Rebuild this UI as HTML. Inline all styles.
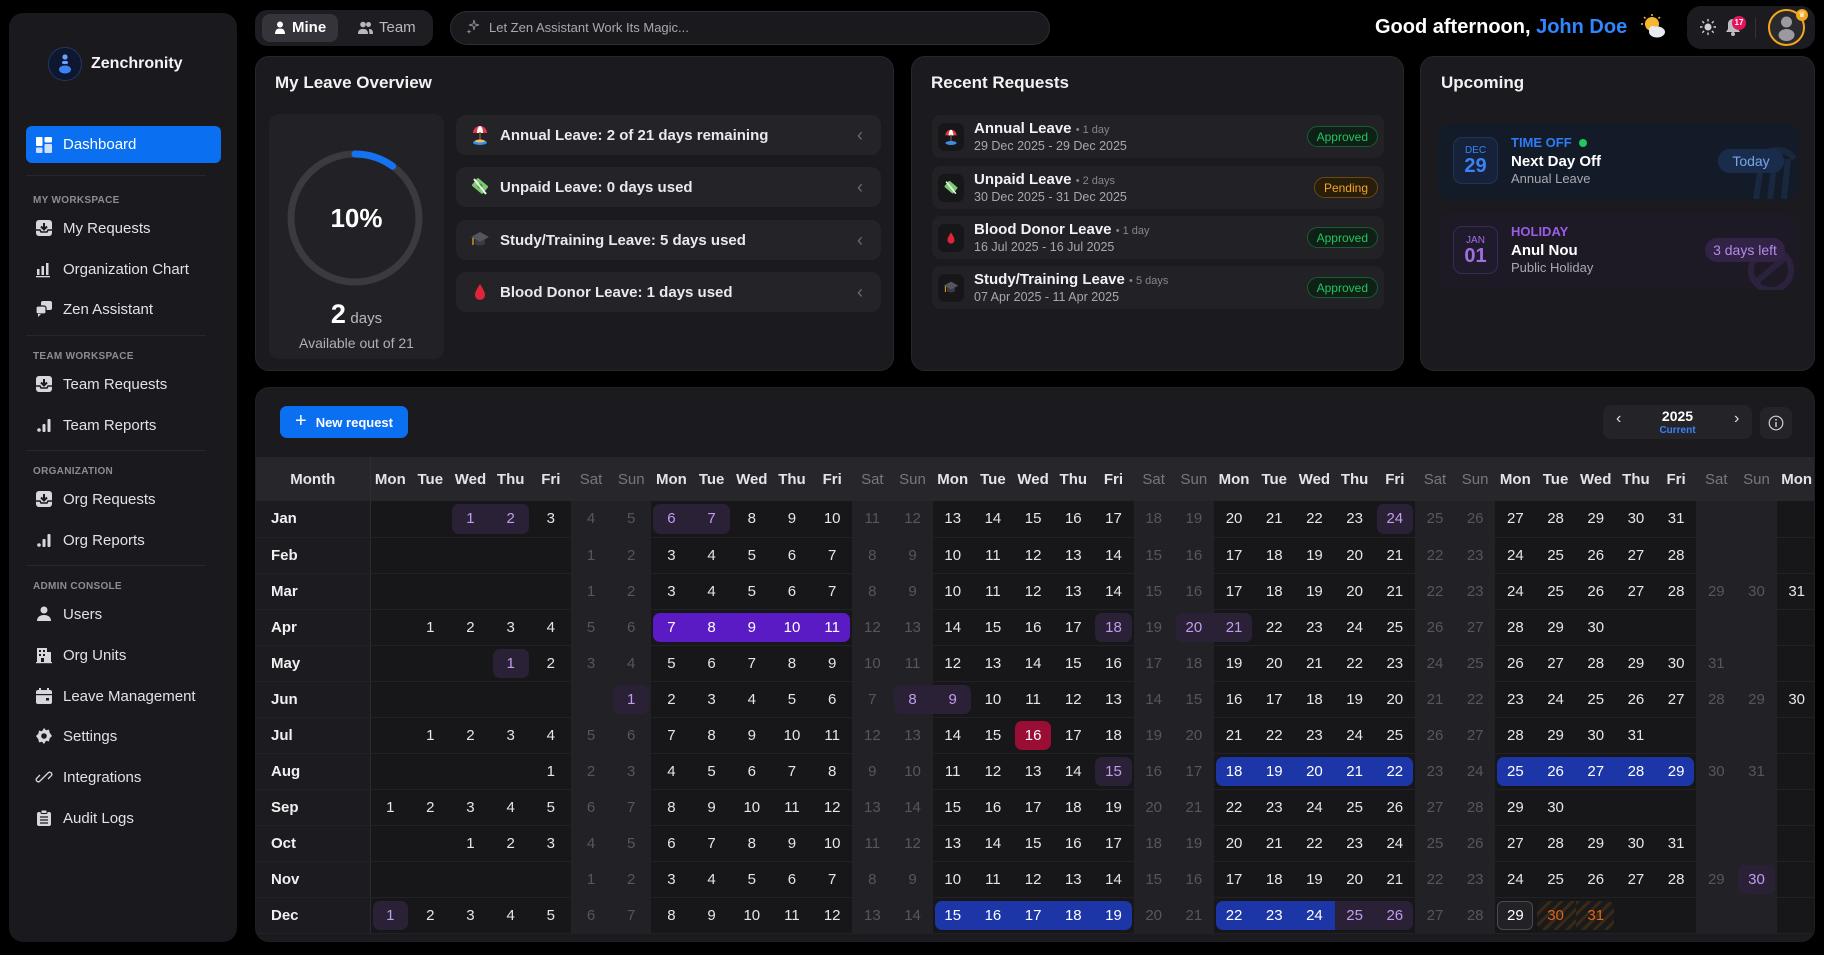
<!DOCTYPE html>
<html><head><meta charset="utf-8">
<style>
*{box-sizing:border-box;margin:0;padding:0}
body{width:1824px;height:955px;background:#000;font-family:"Liberation Sans",sans-serif;color:#e9e9ec;position:relative;overflow:hidden}
.abs{position:absolute}
.card{position:absolute;background:#1b1b1f;border:1px solid #26262b;border-radius:14px;overflow:hidden}
.side{left:9px;top:13px;width:228px;height:929px;background:#1a1a1e;border-radius:14px;position:absolute}
.nav{position:absolute;left:0;width:228px;height:36px;display:flex;align-items:center;font-size:15px;color:#e2e2e6}
.nav svg{position:absolute;left:26px}
.nav span{position:absolute;left:54px}
.sh{position:absolute;left:24px;font-size:10px;font-weight:bold;color:#8c8c94;letter-spacing:.3px}
.dv{position:absolute;left:17px;width:180px;height:1px;background:#26262b}
.title{position:absolute;font-size:17px;font-weight:bold;color:#f2f2f4}
.lrow{position:absolute;left:200px;width:425px;height:40px;background:#232328;border-radius:10px;font-size:15px;font-weight:bold;display:flex;align-items:center}
.lrow svg{margin-left:14px;margin-right:10px}
.lrow .ch{position:absolute;right:18px;color:#6a6a72;font-weight:normal;font-size:18px}
.rq{position:absolute;left:20px;width:452px;height:43px;background:#212126;border-radius:9px}
.rq .ic{position:absolute;left:6px;top:8px;width:26px;height:28px;border-radius:7px;background:#17171a;display:flex;align-items:center;justify-content:center}
.rq .t{position:absolute;left:42px;top:5px;font-size:15px;font-weight:bold;color:#f2f2f4;white-space:nowrap}
.rq .t small{font-size:11px;color:#85858c;font-weight:normal}
.rq .d{position:absolute;left:42px;top:24px;font-size:12.5px;color:#a7a7ae}
.bd{position:absolute;right:6px;top:11px;height:21px;border-radius:11px;font-size:12px;display:flex;align-items:center;padding:0 9px}
.ap{color:#22c55e;border:1px solid #1b5a34;background:#0f2117}
.pe{color:#f5a524;border:1px solid #6a4812;background:#281e0a}
table{position:absolute;left:0;top:69px;border-collapse:collapse;table-layout:fixed;width:1601px}
th,td{height:36px;text-align:center;font-size:15px;font-weight:bold;border-bottom:1px solid #222226;position:relative;z-index:0;padding:0}
thead th{height:44px;background:#26262b;color:#e4e4e8;border:none;width:40.2px}
thead th:first-child{width:114px}
thead th.w{color:#77777e;font-weight:normal}
tbody th{text-align:left;padding-left:15px;background:#1c1c20;color:#f0f0f2;border-right:1px solid #2a2a2f}
thead th:first-child{text-align:center;padding:0;border-right:1px solid #2e2e33}
td{color:#e6e6ea;font-weight:normal}
col.w{background:#222226}
col.d{background:#17171a}
td:nth-child(7n+7),td:nth-child(7n+8){color:#56565c}
td.hp,td.hv,td.hr,td.hb,td.tt,td.hs{font-weight:normal}
td.hp::before,td.hv::before,td.hr::before,td.hb::before,td.tt::before,td.hs::before{content:"";position:absolute;top:3px;bottom:3px;left:0;right:0;z-index:-1}
td.L::before{left:2px;border-top-left-radius:7px;border-bottom-left-radius:7px}
td.R::before{right:2px;border-top-right-radius:7px;border-bottom-right-radius:7px}
td.hp{color:#c39bf0}
td.hp::before{background:#2a2136}
td.hv{color:#fff}
td.hv::before{background:#5a1bc4}
td.hr{color:#fff}
td.hr::before{background:#9a0d34}
td.hb{color:#fff}
td.hb::before{background:#1c36a8}
td.tt{color:#fff}
td.tt::before{left:2px;right:2px;border:1px solid #4a4a50;border-radius:6px;background:#222226}
td.hs{color:#e0651c}
td.hs::before{background:repeating-linear-gradient(135deg,#3a2a14 0 3px,#1a1a1c 3px 8px)}
</style></head><body>

<!-- SIDEBAR -->
<div class="side">
  <div class="abs" style="left:39px;top:34px;width:34px;height:34px;border-radius:50%;background:#0e1730;border:1px solid #223660"></div>
  <svg class="abs" style="left:47px;top:40px" width="18" height="22" viewBox="0 0 18 22"><circle cx="9" cy="4" r="2.6" fill="#6aa1ff"/><rect x="6" y="8" width="6" height="3" rx="1.5" fill="#6aa1ff"/><ellipse cx="9" cy="16.5" rx="6" ry="4" fill="#3b82f6"/></svg>
  <div class="abs" style="left:82px;top:42px;font-size:16px;font-weight:bold;color:#f4f4f6">Zenchronity</div>
  <div class="abs" style="left:17px;top:113px;width:195px;height:37px;border-radius:6px;background:#0a6ff0"></div>
  <svg class="abs" style="left:27px;top:124px" width="16" height="16" viewBox="0 0 16 16"><rect x="0" y="0" width="6.5" height="9" rx="1" fill="#fff"/><rect x="0" y="10.5" width="6.5" height="5.5" rx="1" fill="#cfe0ff"/><rect x="8.5" y="0" width="7.5" height="5.5" rx="1" fill="#fff"/><rect x="8.5" y="7" width="7.5" height="9" rx="1" fill="#cfe0ff"/></svg>
  <div class="abs" style="left:54px;top:123px;font-size:15px;color:#fff">Dashboard</div>
  <div class="dv" style="top:162px"></div>

  <div class="sh" style="top:182px">MY WORKSPACE</div>
  <div class="nav" style="top:197px"><svg width="18" height="18" viewBox="0 0 18 18"><rect x="1" y="1" width="16" height="16" rx="3" fill="#d8d8dc"/><path d="M9 4v6M6 7.5l3 3 3-3" stroke="#1a1a1e" stroke-width="2" fill="none"/><path d="M1 11h4l1 2h6l1-2h4" stroke="#1a1a1e" stroke-width="1.5" fill="none"/></svg><span>My Requests</span></div>
  <div class="nav" style="top:238px"><svg width="18" height="18" viewBox="0 0 18 18"><rect x="2" y="9" width="2.5" height="6" fill="#d8d8dc"/><rect x="6.5" y="6" width="2.5" height="9" fill="#d8d8dc"/><rect x="11" y="3" width="2.5" height="12" fill="#d8d8dc"/><rect x="1" y="16" width="14" height="1.3" fill="#d8d8dc"/></svg><span>Organization Chart</span></div>
  <div class="nav" style="top:278px"><svg width="18" height="18" viewBox="0 0 18 18"><rect x="6" y="1" width="11" height="9" rx="2" fill="#d8d8dc"/><rect x="1" y="6" width="10" height="8" rx="2" fill="#d8d8dc" stroke="#1a1a1e" stroke-width="1.2"/><path d="M3 14v3l3-3" fill="#d8d8dc"/></svg><span>Zen Assistant</span></div>
  <div class="dv" style="top:322px"></div>

  <div class="sh" style="top:338px">TEAM WORKSPACE</div>
  <div class="nav" style="top:353px"><svg width="18" height="18" viewBox="0 0 18 18"><rect x="1" y="1" width="16" height="16" rx="3" fill="#d8d8dc"/><path d="M9 4v6M6 7.5l3 3 3-3" stroke="#1a1a1e" stroke-width="2" fill="none"/><path d="M1 11h4l1 2h6l1-2h4" stroke="#1a1a1e" stroke-width="1.5" fill="none"/></svg><span>Team Requests</span></div>
  <div class="nav" style="top:394px"><svg width="18" height="18" viewBox="0 0 18 18"><circle cx="4" cy="14" r="1.8" fill="#d8d8dc"/><rect x="7.5" y="8" width="3" height="8" rx="1" fill="#d8d8dc"/><rect x="12.5" y="3" width="3" height="13" rx="1" fill="#d8d8dc"/></svg><span>Team Reports</span></div>
  <div class="dv" style="top:437px"></div>

  <div class="sh" style="top:453px">ORGANIZATION</div>
  <div class="nav" style="top:468px"><svg width="18" height="18" viewBox="0 0 18 18"><rect x="1" y="1" width="16" height="16" rx="3" fill="#d8d8dc"/><path d="M9 4v6M6 7.5l3 3 3-3" stroke="#1a1a1e" stroke-width="2" fill="none"/><path d="M1 11h4l1 2h6l1-2h4" stroke="#1a1a1e" stroke-width="1.5" fill="none"/></svg><span>Org Requests</span></div>
  <div class="nav" style="top:509px"><svg width="18" height="18" viewBox="0 0 18 18"><circle cx="4" cy="14" r="1.8" fill="#d8d8dc"/><rect x="7.5" y="8" width="3" height="8" rx="1" fill="#d8d8dc"/><rect x="12.5" y="3" width="3" height="13" rx="1" fill="#d8d8dc"/></svg><span>Org Reports</span></div>
  <div class="dv" style="top:552px"></div>

  <div class="sh" style="top:568px">ADMIN CONSOLE</div>
  <div class="nav" style="top:583px"><svg width="18" height="18" viewBox="0 0 18 18"><circle cx="9" cy="5" r="3.5" fill="#d8d8dc"/><path d="M2 16c0-4 3-6 7-6s7 2 7 6z" fill="#d8d8dc"/></svg><span>Users</span></div>
  <div class="nav" style="top:624px"><svg width="18" height="18" viewBox="0 0 18 18"><rect x="2" y="2" width="10" height="14" fill="#d8d8dc"/><rect x="12" y="6" width="4" height="10" fill="#d8d8dc"/><rect x="4" y="4" width="2" height="2" fill="#1a1a1e"/><rect x="8" y="4" width="2" height="2" fill="#1a1a1e"/><rect x="4" y="8" width="2" height="2" fill="#1a1a1e"/><rect x="8" y="8" width="2" height="2" fill="#1a1a1e"/><rect x="6" y="12" width="3" height="4" fill="#1a1a1e"/><rect x="1" y="16" width="16" height="1.2" fill="#d8d8dc"/></svg><span>Org Units</span></div>
  <div class="nav" style="top:665px"><svg width="18" height="18" viewBox="0 0 18 18"><rect x="1" y="3" width="16" height="14" rx="2" fill="#d8d8dc"/><rect x="1" y="7" width="16" height="1.2" fill="#1a1a1e"/><rect x="4" y="1" width="2" height="4" fill="#d8d8dc"/><rect x="12" y="1" width="2" height="4" fill="#d8d8dc"/><rect x="11" y="11" width="3" height="2.5" fill="#1a1a1e"/></svg><span>Leave Management</span></div>
  <div class="nav" style="top:705px"><svg width="18" height="18" viewBox="0 0 18 18"><path d="M9 1l2 2.2 3-.6.6 3L17 9l-2.4 2.4-.6 3-3-.6L9 17l-2-2.2-3 .6-.6-3L1 9l2.4-2.4.6-3 3 .6z" fill="#d8d8dc"/><circle cx="9" cy="9" r="2.8" fill="#1a1a1e"/></svg><span>Settings</span></div>
  <div class="nav" style="top:746px"><svg width="18" height="18" viewBox="0 0 18 18"><path d="M8 10l-3.5 3.5a2.2 2.2 0 01-3-3L5 7M10 8l3.5-3.5a2.2 2.2 0 013 3L13 11M6.5 11.5l5-5" stroke="#d8d8dc" stroke-width="1.3" fill="none"/></svg><span>Integrations</span></div>
  <div class="nav" style="top:787px"><svg width="18" height="18" viewBox="0 0 18 18"><rect x="2" y="3" width="14" height="14" rx="2" fill="#d8d8dc"/><rect x="6" y="1" width="6" height="3.5" rx="1" fill="#d8d8dc" stroke="#1a1a1e"/><path d="M5 8h8M5 11h8M5 14h8" stroke="#1a1a1e" stroke-width="1.3"/></svg><span>Audit Logs</span></div>
</div>

<!-- TOP BAR -->
<div class="abs" style="left:255px;top:10px;width:178px;height:36px;border-radius:12px;background:#1e1e22"></div>
<div class="abs" style="left:262px;top:14px;width:76px;height:28px;border-radius:8px;background:#34343a"></div>
<svg class="abs" style="left:274px;top:21px" width="12" height="13" viewBox="0 0 12 13"><circle cx="6" cy="3.5" r="3" fill="#fff"/><path d="M1 13c0-4 2-5.5 5-5.5s5 1.5 5 5.5z" fill="#fff"/></svg>
<div class="abs" style="left:292px;top:19px;font-size:15px;font-weight:bold;color:#fff">Mine</div>
<svg class="abs" style="left:358px;top:21px" width="15" height="13" viewBox="0 0 15 13"><circle cx="5" cy="3.5" r="2.8" fill="#b8b8be"/><circle cx="10.5" cy="3.5" r="2.5" fill="#b8b8be"/><path d="M0 13c0-4 2-5 5-5s5 1 5 5z" fill="#b8b8be"/><path d="M11 8c2.5 0 4 1 4 5h-3.5z" fill="#b8b8be"/></svg>
<div class="abs" style="left:379px;top:19px;font-size:15px;color:#b8b8be">Team</div>

<div class="abs" style="left:450px;top:11px;width:600px;height:34px;border-radius:17px;background:#1a1a1e;border:1px solid #2e2e33"></div>
<svg class="abs" style="left:466px;top:19px" width="14" height="16" viewBox="0 0 14 16"><path d="M8 1l1 4 4 1-4 1-1 4-1-4-4-1 4-1z" fill="none" stroke="#8a8a92" stroke-width="1"/><path d="M3 10l.6 2 2 .6-2 .6L3 15l-.6-1.8-2-.6 2-.6z" fill="#8a8a92"/></svg>
<div class="abs" style="left:489px;top:20px;font-size:13px;color:#a8a8b0">Let Zen Assistant Work Its Magic...</div>

<div class="abs" style="left:1375px;top:16px;font-size:20px;font-weight:bold;color:#fff;white-space:nowrap">Good afternoon, <span style="color:#2f86ff">John Doe</span></div>
<svg class="abs" style="left:1641px;top:14px" width="26" height="26" viewBox="0 0 26 26"><circle cx="11" cy="10" r="7" fill="#f7b733"/><g stroke="#f7b733" stroke-width="1.5"><path d="M11 0v2M3 3l1.5 1.5M0 10h2M19 3l-1.5 1.5"/></g><ellipse cx="16" cy="18" rx="8" ry="5.5" fill="#e8ecf2"/><circle cx="12" cy="16" r="4" fill="#e8ecf2"/></svg>

<div class="abs" style="left:1687px;top:6px;width:128px;height:43px;border-radius:14px;background:#1c1c20"></div>
<svg class="abs" style="left:1700px;top:19px" width="16" height="16" viewBox="0 0 16 16"><circle cx="8" cy="8" r="3.5" fill="#d0d0d4"/><g stroke="#d0d0d4" stroke-width="1.4"><path d="M8 0v2.5M8 13.5V16M0 8h2.5M13.5 8H16M2.3 2.3l1.8 1.8M11.9 11.9l1.8 1.8M2.3 13.7l1.8-1.8M11.9 4.1l1.8-1.8"/></g></svg>
<svg class="abs" style="left:1725px;top:18px" width="16" height="18" viewBox="0 0 16 18"><path d="M8 1c3 0 5 2 5 5v5l2 3H1l2-3V6c0-3 2-5 5-5z" fill="#bdbdc2"/><circle cx="8" cy="16" r="2" fill="#bdbdc2"/></svg>
<div class="abs" style="left:1732px;top:16px;width:14px;height:14px;border-radius:50%;background:#e5145a;font-size:8px;color:#fff;font-weight:bold;text-align:center;line-height:14px">17</div>
<div class="abs" style="left:1755px;top:18px;width:1px;height:20px;background:#333338"></div>
<div class="abs" style="left:1768px;top:9px;width:37px;height:37px;border-radius:50%;border:2px solid #f2a81d;background:#2a2a2e"></div>
<svg class="abs" style="left:1776px;top:15px" width="21" height="26" viewBox="0 0 21 26"><circle cx="10.5" cy="7" r="5.5" fill="#9a9aa0"/><ellipse cx="10.5" cy="20" rx="8" ry="6" fill="#9a9aa0"/></svg>
<div class="abs" style="left:1796px;top:9px;width:12px;height:12px;border-radius:50%;background:#f2a81d;font-size:8px;color:#fff;text-align:center;line-height:12px">♛</div>

<!-- MY LEAVE OVERVIEW -->
<div class="card" style="left:255px;top:56px;width:639px;height:315px">
  <div class="title" style="left:19px;top:16px">My Leave Overview</div>
  <div class="abs" style="left:13px;top:57px;width:175px;height:245px;border-radius:10px;background:#212126"></div>
  <svg class="abs" style="left:30px;top:92px" width="138" height="138" viewBox="0 0 138 138"><circle cx="69" cy="69" r="64" fill="none" stroke="#3a3a40" stroke-width="7"/><circle cx="69" cy="69" r="64" fill="none" stroke="#1572f0" stroke-width="7" stroke-dasharray="40.2 402" transform="rotate(-90 69 69)" stroke-linecap="round"/></svg>
  <div class="abs" style="left:13px;top:146px;width:175px;text-align:center;font-size:26px;font-weight:bold;color:#fff">10%</div>
  <div class="abs" style="left:13px;top:242px;width:175px;text-align:center;color:#fff"><span style="font-size:27px;font-weight:bold">2</span> <span style="font-size:15px;color:#b8b8be">days</span></div>
  <div class="abs" style="left:13px;top:278px;width:175px;text-align:center;font-size:14px;color:#b0b0b6">Available out of 21</div>

  <div class="lrow" style="top:58px"><svg width="20" height="22" viewBox="0 0 20 22"><path d="M3 9a7 7 0 0114 0z" fill="#e5364a"/><path d="M7 9a3 7 0 016 0z" fill="#fff"/><rect x="9.3" y="8" width="1.4" height="9" fill="#8a5a2a"/><ellipse cx="10" cy="18.5" rx="7" ry="2.5" fill="#3a8ee6"/><ellipse cx="10" cy="17" rx="5" ry="1.5" fill="#f0c060"/></svg>Annual Leave: 2 of 21 days remaining<span class="ch">&#8249;</span></div>
  <div class="lrow" style="top:110px"><svg width="20" height="22" viewBox="0 0 20 22"><rect x="3" y="5" width="14" height="10" rx="1" fill="#7bc96f" transform="rotate(40 10 10)"/><circle cx="10" cy="10" r="2.5" fill="#3f8f3a"/><path d="M4 3l12 15" stroke="#f0f0f0" stroke-width="2"/></svg>Unpaid Leave: 0 days used<span class="ch">&#8249;</span></div>
  <div class="lrow" style="top:163px"><svg width="20" height="22" viewBox="0 0 20 22"><path d="M10 3l9 5-9 5-9-5z" fill="#555560"/><path d="M5 10v5c3 2 7 2 10 0v-5l-5 3z" fill="#3a3a42"/><path d="M3 9v7" stroke="#f0a020" stroke-width="1.3"/></svg>Study/Training Leave: 5 days used<span class="ch">&#8249;</span></div>
  <div class="lrow" style="top:215px"><svg width="20" height="22" viewBox="0 0 20 22"><path d="M10 3c3 5 5 8 5 11a5 5 0 01-10 0c0-3 2-6 5-11z" fill="#e0243a"/></svg>Blood Donor Leave: 1 days used<span class="ch">&#8249;</span></div>
</div>

<!-- RECENT REQUESTS -->
<div class="card" style="left:911px;top:56px;width:493px;height:315px">
  <div class="title" style="left:19px;top:16px">Recent Requests</div>
  <div class="rq" style="top:58px"><div class="ic"><svg width="16" height="18" viewBox="0 0 20 22"><path d="M3 9a7 7 0 0114 0z" fill="#e5364a"/><path d="M7 9a3 7 0 016 0z" fill="#fff"/><rect x="9.3" y="8" width="1.4" height="9" fill="#8a5a2a"/><ellipse cx="10" cy="18.5" rx="7" ry="2.5" fill="#3a8ee6"/></svg></div><div class="t">Annual Leave <small>• 1 day</small></div><div class="d">29 Dec 2025 - 29 Dec 2025</div><div class="bd ap">Approved</div></div>
  <div class="rq" style="top:109px"><div class="ic"><svg width="16" height="18" viewBox="0 0 20 22"><rect x="3" y="5" width="14" height="10" rx="1" fill="#7bc96f" transform="rotate(40 10 10)"/><path d="M4 3l12 15" stroke="#f0f0f0" stroke-width="2"/></svg></div><div class="t">Unpaid Leave <small>• 2 days</small></div><div class="d">30 Dec 2025 - 31 Dec 2025</div><div class="bd pe">Pending</div></div>
  <div class="rq" style="top:159px"><div class="ic"><svg width="14" height="18" viewBox="0 0 20 22"><path d="M10 3c3 5 5 8 5 11a5 5 0 01-10 0c0-3 2-6 5-11z" fill="#e0243a"/></svg></div><div class="t">Blood Donor Leave <small>• 1 day</small></div><div class="d">16 Jul 2025 - 16 Jul 2025</div><div class="bd ap">Approved</div></div>
  <div class="rq" style="top:209px"><div class="ic"><svg width="16" height="18" viewBox="0 0 20 22"><path d="M10 3l9 5-9 5-9-5z" fill="#555560"/><path d="M5 10v5c3 2 7 2 10 0v-5l-5 3z" fill="#3a3a42"/><path d="M3 9v7" stroke="#f0a020" stroke-width="1.3"/></svg></div><div class="t">Study/Training Leave <small>• 5 days</small></div><div class="d">07 Apr 2025 - 11 Apr 2025</div><div class="bd ap">Approved</div></div>
</div>

<!-- UPCOMING -->
<div class="card" style="left:1420px;top:56px;width:395px;height:315px">
  <div class="title" style="left:20px;top:16px">Upcoming</div>
  <div class="abs" style="left:17px;top:66px;width:361px;height:77px;border-radius:14px;background:#141b28"></div>
  <svg class="abs" style="left:325px;top:90px;opacity:.5" width="50" height="52" viewBox="0 0 50 52"><path d="M10 52l6-40M24 52l5-40M38 52l4-40M12 12c8-12 30-12 36 0" stroke="#1e3357" stroke-width="6" fill="none"/></svg>
  <div class="abs" style="left:32px;top:80px;width:45px;height:47px;border-radius:9px;background:#15223a;border:1px solid #1f3456;text-align:center"><div style="font-size:10px;color:#3b82f6;margin-top:7px">DEC</div><div style="font-size:20px;color:#3b82f6;font-weight:bold;line-height:20px">29</div></div>
  <div class="abs" style="left:90px;top:78px;font-size:13px;font-weight:bold;color:#2f7cf6">TIME OFF <span style="display:inline-block;width:8px;height:8px;border-radius:50%;background:#22c55e;margin-left:4px"></span></div>
  <div class="abs" style="left:90px;top:96px;font-size:15px;font-weight:bold;color:#fff">Next Day Off</div>
  <div class="abs" style="left:90px;top:114px;font-size:13px;color:#a8a8b0">Annual Leave</div>
  <div class="abs" style="left:297px;top:92px;width:66px;height:24px;border-radius:12px;background:#1a2c4c;color:#79a6ea;font-size:14px;text-align:center;line-height:24px">Today</div>

  <div class="abs" style="left:17px;top:156px;width:361px;height:76px;border-radius:14px;background:#1d1a26"></div>
  <svg class="abs" style="left:325px;top:185px;opacity:.5" width="50" height="48" viewBox="0 0 50 48"><circle cx="25" cy="28" r="20" fill="none" stroke="#3c2b55" stroke-width="6"/><path d="M10 40l30-25" stroke="#3c2b55" stroke-width="6"/></svg>
  <div class="abs" style="left:32px;top:169px;width:45px;height:48px;border-radius:9px;background:#201a2d;border:1px solid #3a2a55;text-align:center"><div style="font-size:10px;color:#a070e0;margin-top:8px">JAN</div><div style="font-size:20px;color:#a070e0;font-weight:bold;line-height:20px">01</div></div>
  <div class="abs" style="left:90px;top:167px;font-size:13px;font-weight:bold;color:#9b5de5">HOLIDAY</div>
  <div class="abs" style="left:90px;top:185px;font-size:15px;font-weight:bold;color:#fff">Anul Nou</div>
  <div class="abs" style="left:90px;top:203px;font-size:13px;color:#a8a8b0">Public Holiday</div>
  <div class="abs" style="left:284px;top:181px;width:80px;height:24px;border-radius:12px;background:#322346;color:#b48ce8;font-size:14px;text-align:center;line-height:24px">3 days left</div>
</div>

<!-- CALENDAR -->
<div class="card" style="left:255px;top:387px;width:1560px;height:555px;border-color:#1f1f24">
  <div class="abs" style="left:24px;top:18px;width:128px;height:32px;border-radius:7px;background:#0a6ff0;color:#fff;font-size:13px;font-weight:bold;display:flex;align-items:center;justify-content:center"><span style="font-size:20px;font-weight:normal;margin-right:9px;margin-top:-2px">+</span>New request</div>
  <div class="abs" style="left:1347px;top:17px;width:149px;height:34px;border-radius:8px;background:#232328"></div>
  <div class="abs" style="left:1360px;top:22px;font-size:16px;color:#e0e0e4">&#8249;</div>
  <div class="abs" style="left:1478px;top:22px;font-size:16px;color:#e0e0e4">&#8250;</div>
  <div class="abs" style="left:1347px;top:20px;width:149px;text-align:center;font-size:14px;font-weight:bold;color:#fff">2025</div>
  <div class="abs" style="left:1347px;top:37px;width:149px;text-align:center;font-size:10px;font-weight:bold;color:#3b82f6">Current</div>
  <div class="abs" style="left:1504px;top:19px;width:32px;height:32px;border-radius:8px;background:#232328"></div>
  <svg class="abs" style="left:1512px;top:27px" width="16" height="16" viewBox="0 0 16 16"><circle cx="8" cy="8" r="6.8" fill="none" stroke="#d0d0d4" stroke-width="1.2"/><rect x="7.3" y="7" width="1.4" height="5" fill="#d0d0d4"/><circle cx="8" cy="4.8" r=".9" fill="#d0d0d4"/></svg>

<table>
<colgroup><col style="background:#1c1c20">
<col class="d" span="5"><col class="w" span="2">
<col class="d" span="5"><col class="w" span="2">
<col class="d" span="5"><col class="w" span="2">
<col class="d" span="5"><col class="w" span="2">
<col class="d" span="5"><col class="w" span="2">
<col class="d"></colgroup>
<thead><tr><th>Month</th><th>Mon</th><th>Tue</th><th>Wed</th><th>Thu</th><th>Fri</th><th class="w">Sat</th><th class="w">Sun</th><th>Mon</th><th>Tue</th><th>Wed</th><th>Thu</th><th>Fri</th><th class="w">Sat</th><th class="w">Sun</th><th>Mon</th><th>Tue</th><th>Wed</th><th>Thu</th><th>Fri</th><th class="w">Sat</th><th class="w">Sun</th><th>Mon</th><th>Tue</th><th>Wed</th><th>Thu</th><th>Fri</th><th class="w">Sat</th><th class="w">Sun</th><th>Mon</th><th>Tue</th><th>Wed</th><th>Thu</th><th>Fri</th><th class="w">Sat</th><th class="w">Sun</th><th>Mon</th></tr></thead>
<tbody>
<tr><th>Jan</th><td></td><td></td><td class="hp L">1</td><td class="hp R">2</td><td>3</td><td>4</td><td>5</td><td class="hp L">6</td><td class="hp R">7</td><td>8</td><td>9</td><td>10</td><td>11</td><td>12</td><td>13</td><td>14</td><td>15</td><td>16</td><td>17</td><td>18</td><td>19</td><td>20</td><td>21</td><td>22</td><td>23</td><td class="hp L R">24</td><td>25</td><td>26</td><td>27</td><td>28</td><td>29</td><td>30</td><td>31</td><td></td><td></td><td></td><td></td></tr>
<tr><th>Feb</th><td></td><td></td><td></td><td></td><td></td><td>1</td><td>2</td><td>3</td><td>4</td><td>5</td><td>6</td><td>7</td><td>8</td><td>9</td><td>10</td><td>11</td><td>12</td><td>13</td><td>14</td><td>15</td><td>16</td><td>17</td><td>18</td><td>19</td><td>20</td><td>21</td><td>22</td><td>23</td><td>24</td><td>25</td><td>26</td><td>27</td><td>28</td><td></td><td></td><td></td><td></td></tr>
<tr><th>Mar</th><td></td><td></td><td></td><td></td><td></td><td>1</td><td>2</td><td>3</td><td>4</td><td>5</td><td>6</td><td>7</td><td>8</td><td>9</td><td>10</td><td>11</td><td>12</td><td>13</td><td>14</td><td>15</td><td>16</td><td>17</td><td>18</td><td>19</td><td>20</td><td>21</td><td>22</td><td>23</td><td>24</td><td>25</td><td>26</td><td>27</td><td>28</td><td>29</td><td>30</td><td>31</td><td></td></tr>
<tr><th>Apr</th><td></td><td>1</td><td>2</td><td>3</td><td>4</td><td>5</td><td>6</td><td class="hv L">7</td><td class="hv">8</td><td class="hv">9</td><td class="hv">10</td><td class="hv R">11</td><td>12</td><td>13</td><td>14</td><td>15</td><td>16</td><td>17</td><td class="hp L R">18</td><td>19</td><td class="hp L">20</td><td class="hp R">21</td><td>22</td><td>23</td><td>24</td><td>25</td><td>26</td><td>27</td><td>28</td><td>29</td><td>30</td><td></td><td></td><td></td><td></td><td></td><td></td></tr>
<tr><th>May</th><td></td><td></td><td></td><td class="hp L R">1</td><td>2</td><td>3</td><td>4</td><td>5</td><td>6</td><td>7</td><td>8</td><td>9</td><td>10</td><td>11</td><td>12</td><td>13</td><td>14</td><td>15</td><td>16</td><td>17</td><td>18</td><td>19</td><td>20</td><td>21</td><td>22</td><td>23</td><td>24</td><td>25</td><td>26</td><td>27</td><td>28</td><td>29</td><td>30</td><td>31</td><td></td><td></td><td></td></tr>
<tr><th>Jun</th><td></td><td></td><td></td><td></td><td></td><td></td><td class="hp L R">1</td><td>2</td><td>3</td><td>4</td><td>5</td><td>6</td><td>7</td><td class="hp L">8</td><td class="hp R">9</td><td>10</td><td>11</td><td>12</td><td>13</td><td>14</td><td>15</td><td>16</td><td>17</td><td>18</td><td>19</td><td>20</td><td>21</td><td>22</td><td>23</td><td>24</td><td>25</td><td>26</td><td>27</td><td>28</td><td>29</td><td>30</td><td></td></tr>
<tr><th>Jul</th><td></td><td>1</td><td>2</td><td>3</td><td>4</td><td>5</td><td>6</td><td>7</td><td>8</td><td>9</td><td>10</td><td>11</td><td>12</td><td>13</td><td>14</td><td>15</td><td class="hr L R">16</td><td>17</td><td>18</td><td>19</td><td>20</td><td>21</td><td>22</td><td>23</td><td>24</td><td>25</td><td>26</td><td>27</td><td>28</td><td>29</td><td>30</td><td>31</td><td></td><td></td><td></td><td></td><td></td></tr>
<tr><th>Aug</th><td></td><td></td><td></td><td></td><td>1</td><td>2</td><td>3</td><td>4</td><td>5</td><td>6</td><td>7</td><td>8</td><td>9</td><td>10</td><td>11</td><td>12</td><td>13</td><td>14</td><td class="hp L R">15</td><td>16</td><td>17</td><td class="hb L">18</td><td class="hb">19</td><td class="hb">20</td><td class="hb">21</td><td class="hb R">22</td><td>23</td><td>24</td><td class="hb L">25</td><td class="hb">26</td><td class="hb">27</td><td class="hb">28</td><td class="hb R">29</td><td>30</td><td>31</td><td></td><td></td></tr>
<tr><th>Sep</th><td>1</td><td>2</td><td>3</td><td>4</td><td>5</td><td>6</td><td>7</td><td>8</td><td>9</td><td>10</td><td>11</td><td>12</td><td>13</td><td>14</td><td>15</td><td>16</td><td>17</td><td>18</td><td>19</td><td>20</td><td>21</td><td>22</td><td>23</td><td>24</td><td>25</td><td>26</td><td>27</td><td>28</td><td>29</td><td>30</td><td></td><td></td><td></td><td></td><td></td><td></td><td></td></tr>
<tr><th>Oct</th><td></td><td></td><td>1</td><td>2</td><td>3</td><td>4</td><td>5</td><td>6</td><td>7</td><td>8</td><td>9</td><td>10</td><td>11</td><td>12</td><td>13</td><td>14</td><td>15</td><td>16</td><td>17</td><td>18</td><td>19</td><td>20</td><td>21</td><td>22</td><td>23</td><td>24</td><td>25</td><td>26</td><td>27</td><td>28</td><td>29</td><td>30</td><td>31</td><td></td><td></td><td></td><td></td></tr>
<tr><th>Nov</th><td></td><td></td><td></td><td></td><td></td><td>1</td><td>2</td><td>3</td><td>4</td><td>5</td><td>6</td><td>7</td><td>8</td><td>9</td><td>10</td><td>11</td><td>12</td><td>13</td><td>14</td><td>15</td><td>16</td><td>17</td><td>18</td><td>19</td><td>20</td><td>21</td><td>22</td><td>23</td><td>24</td><td>25</td><td>26</td><td>27</td><td>28</td><td>29</td><td class="hp L R">30</td><td></td><td></td></tr>
<tr><th>Dec</th><td class="hp L R">1</td><td>2</td><td>3</td><td>4</td><td>5</td><td>6</td><td>7</td><td>8</td><td>9</td><td>10</td><td>11</td><td>12</td><td>13</td><td>14</td><td class="hb L">15</td><td class="hb">16</td><td class="hb">17</td><td class="hb">18</td><td class="hb R">19</td><td>20</td><td>21</td><td class="hb L">22</td><td class="hb">23</td><td class="hb">24</td><td class="hp">25</td><td class="hp R">26</td><td>27</td><td>28</td><td class="tt">29</td><td class="hs L">30</td><td class="hs R">31</td><td></td><td></td><td></td><td></td><td></td><td></td></tr>
</tbody></table>
</div>
</body></html>
